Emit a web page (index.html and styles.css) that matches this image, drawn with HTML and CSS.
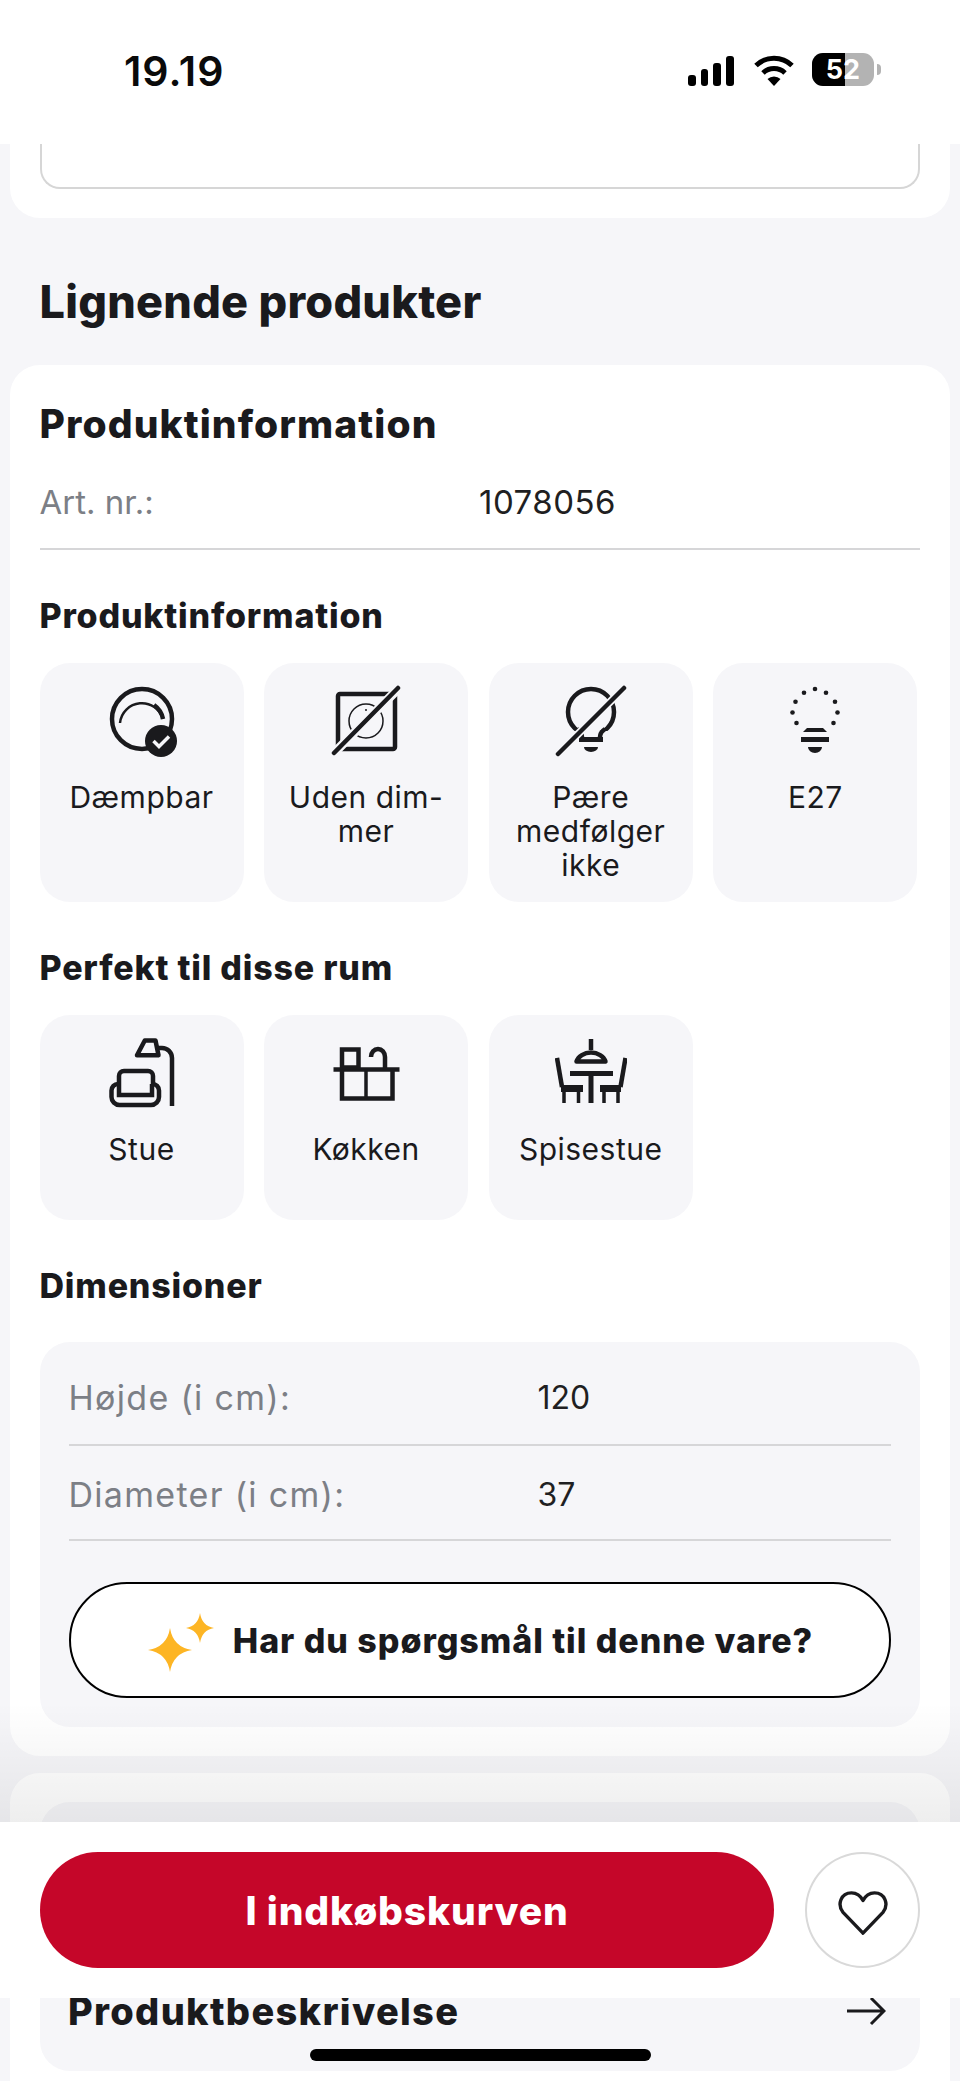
FILE: index.html
```html
<!DOCTYPE html>
<html lang="da">
<head>
<meta charset="utf-8">
<title>Produktinformation</title>
<link rel="stylesheet" href="styles.css">
</head>
<body>
<div class="page">
  <header class="status">
    <span class="clock">19.19</span>
    <div class="status-icons">
      <svg class="signal" width="48" height="32" viewBox="0 0 48 32"><rect x="1" y="20" width="8" height="11" rx="3"/><rect x="14" y="14" width="7" height="17" rx="3"/><rect x="26" y="8" width="8" height="23" rx="3"/><rect x="39" y="1" width="8" height="30" rx="3"/></svg>
      <svg class="wifi" width="42" height="32" viewBox="0 0 42 32"><path d="M3 10.5a26 26 0 0 1 36 0" fill="none" stroke="#000" stroke-width="5"/><path d="M10 18a16 16 0 0 1 22 0" fill="none" stroke="#000" stroke-width="5"/><path d="M14.5 24a9.500 9.500 0 0 1 13 0L21 31z"/></svg>
      <div class="battery"><span class="battery-fill"></span><span class="battery-text">52</span><span class="battery-nub"></span></div>
    </div>
  </header>

  <section class="card card-top"><div class="outline-box"></div></section>

  <h2 class="section-title">Lignende produkter</h2>

  <section class="card card-info">
    <h3 class="card-title">Produktinformation</h3>
    <div class="art-row"><span class="muted">Art. nr.:</span><span class="art-value">1078056</span></div>

    <h4 class="sub-title">Produktinformation</h4>
    <div class="tiles">
      <div class="tile">
        <svg class="icon" viewBox="0 0 72 72"><circle cx="36" cy="34" r="30" class="s4"/><path d="M14 38A22 22 0 0 1 57 34" class="s2"/><path d="M48 20a22 22 0 0 1 9 14" class="s4"/><circle cx="55" cy="56" r="16" class="fill"/><path d="M47.500 56l5.500 5.500 10-10" fill="none" stroke="#f6f6f9" stroke-width="3.500"/></svg>
        <span class="tile-label">Dæmpbar</span>
      </div>
      <div class="tile">
        <svg class="icon" viewBox="0 0 72 72"><rect x="8" y="9" width="57" height="55" rx="2" class="s4"/><circle cx="36" cy="36" r="17" class="s1"/><circle cx="36" cy="25" r="1" class="fill"/><path d="M6 66L66 6" fill="none" stroke="#f6f6f9" stroke-width="9"/><path d="M4 68L68 3" class="s4 round"/></svg>
        <span class="tile-label">Uden dim-<br>mer</span>
      </div>
      <div class="tile">
        <svg class="icon" viewBox="0 0 72 72"><circle cx="36" cy="27" r="23" class="s4"/><rect x="12" y="46" width="48" height="9" fill="#f6f6f9"/><path d="M22 44c3 2 5 5 5 8" class="s4"/><path d="M50 44c-3 2-5 5-5 8" class="s4"/><rect x="24" y="52" width="24" height="5" class="fill"/><path d="M29 62h14a7 5 0 0 1-14 0z" class="fill"/><path d="M6 66L66 6" fill="none" stroke="#f6f6f9" stroke-width="8"/><path d="M3 69L69 3" class="s4 round"/></svg>
        <span class="tile-label">Pære<br>medfølger<br>ikke</span>
      </div>
      <div class="tile">
        <svg class="icon" viewBox="0 0 72 72"><g class="fill"><circle cx="36" cy="4" r="2.300"/><circle cx="47" cy="7.700" r="2.300"/><circle cx="56" cy="16.700" r="2.300"/><circle cx="58.500" cy="27.500" r="2.300"/><circle cx="54.500" cy="38" r="2.300"/><circle cx="17.500" cy="38" r="2.300"/><circle cx="13.500" cy="27.500" r="2.300"/><circle cx="16.500" cy="16.700" r="2.300"/><circle cx="25" cy="7.700" r="2.300"/><path d="M28 43h16l4 4H24z"/><rect x="22" y="52" width="28" height="5"/><path d="M29 62h14a7 6 0 0 1-14 0z"/></g></svg>
        <span class="tile-label">E27</span>
      </div>
    </div>

    <h4 class="sub-title">Perfekt til disse rum</h4>
    <div class="tiles">
      <div class="tile">
        <svg class="icon" viewBox="0 0 72 72"><path d="M31 18.300L38.800 3.500H49.500L52.500 18.300Z" class="s4 joined"/><path d="M52 11h4a10 10 0 0 1 10 10V69" class="s4"/><path d="M13 47V39a5 5 0 0 1 5-5H42a5 5 0 0 1 5 5V47" class="s4"/><path d="M13 47h-1a6.500 6.500 0 0 0-6.500 6.500V60a8 8 0 0 0 8 8H45a8 8 0 0 0 8-8V53.500A6.500 6.500 0 0 0 46.500 47H46" class="s4"/><path d="M13 47V58H46V47" class="s4"/></svg>
        <span class="tile-label">Stue</span>
      </div>
      <div class="tile">
        <svg class="icon" viewBox="0 0 72 72"><path d="M3.500 32.500H69.500" class="s4"/><path d="M12 32.500V61.500H62.500V32.500" class="s4"/><path d="M36 32.500V61.500" class="s3"/><rect x="12" y="12.500" width="16.500" height="18" class="s4"/><path d="M41 20a7 8 0 0 1 14 0V32" class="s4"/></svg>
        <span class="tile-label">Køkken</span>
      </div>
      <div class="tile">
        <svg class="icon" viewBox="0 0 72 72"><path d="M36 2V13" class="s4"/><path d="M21.500 24.500a15 12 0 0 1 29 0z" class="s4 joined"/><path d="M15 36.500H58" class="s5"/><path d="M36 36.500V66" class="s5"/><path d="M2 21L7 50" class="s4"/><path d="M70.500 21L65.500 50" class="s4"/><path d="M6 51.500H28M45 51.500H66" class="s7"/><path d="M9 52V66M23.500 52V66M49 52V66M63 52V66" class="s3"/></svg>
        <span class="tile-label">Spisestue</span>
      </div>
    </div>

    <h4 class="sub-title">Dimensioner</h4>
    <div class="dim-box">
      <div class="dim-row"><span class="muted dim-name">Højde (i cm):</span><span class="dim-value">120</span></div>
      <div class="dim-row"><span class="muted dim-name">Diameter (i cm):</span><span class="dim-value">37</span></div>
      <button class="ask" type="button">
        <svg class="sparkle" width="70" height="62" viewBox="0 0 70 62"><path class="spark" d="M24 16Q27 35 46 38Q27 41 24 60Q21 41 2 38Q21 35 24 16Z"/><path class="spark" d="M54 1Q56 14 68 16Q56 18 54 31Q52 18 40 16Q52 14 54 1Z"/></svg>
        <span>Har du spørgsmål til denne vare?</span>
      </button>
    </div>
  </section>

  <section class="card card-desc">
    <div class="desc-box">
      <span class="desc-title">Produktbeskrivelse</span>
      <svg class="arrow" width="40" height="30" viewBox="0 0 40 30"><path d="M1 15H38M25 2L38 15L25 28" fill="none" stroke="#1a1a1d" stroke-width="3"/></svg>
    </div>
  </section>

  <div class="buybar">
    <button class="buy" type="button">I indkøbskurven</button>
    <button class="fav" type="button" aria-label="Favorit">
      <svg width="50" height="48" viewBox="0 0 52 48"><path d="M26 45L5 23C-1 15 3 3 14 3c5.500 0 9.500 3 12 8 2.500-5 6.500-8 12-8 11 0 15 12 9 20z" fill="none" stroke="#1a1a1d" stroke-width="3.500" stroke-linejoin="round"/></svg>
    </button>
  </div>
  <div class="home-indicator"></div>
</div>
</body>
</html>
```

FILE: styles.css
```css
* { box-sizing: border-box; }
html, body { margin: 0; padding: 0; }
body {
  font-family: Inter, "Liberation Sans", sans-serif;
  color: #1a1a1d;
  background: #f6f6f9;
}
.page {
  position: relative;
  width: 960px;
  height: 2081px;
  overflow: hidden;
  background: #f6f6f9;
}
h2, h3, h4 { margin: 0; }

/* status bar */
.status {
  height: 144px;
  background: #fff;
  display: flex;
  justify-content: space-between;
  padding: 47px 86px 0 124px;
}
.clock {
  font-size: 41px;
  line-height: 48px;
  font-weight: 600;
  color: #0a0a0a;
  letter-spacing: 1px;
}
.status-icons { display: flex; align-items: flex-start; gap: 12px; padding-top: 8px; }
.signal { fill: #000; }
.wifi { fill: #000; margin-left: 6px; }
.battery {
  position: relative;
  width: 62px;
  height: 33px;
  margin-top: -2px;
  margin-left: 5px;
  border-radius: 11px;
  background: #b3b3b3;
}
.battery-fill {
  position: absolute;
  left: 0; top: 0; bottom: 0;
  width: 33px;
  background: #000;
  border-radius: 11px 0 0 11px;
}
.battery-text {
  position: absolute;
  inset: 0;
  text-align: center;
  font-size: 27px;
  line-height: 33px;
  font-weight: 700;
  color: #fff;
}
.battery-nub {
  position: absolute;
  right: -7px; top: 11px;
  width: 4px; height: 11px;
  border-radius: 0 4px 4px 0;
  background: #b3b3b3;
}

/* cards */
.card { margin: 0 10px; background: #fff; }
.card-top { padding: 0 30px 29px; border-radius: 0 0 30px 30px; height: 74px; }
.outline-box {
  height: 45px;
  border: 2px solid #d6d6d6;
  border-top: 0;
  border-radius: 0 0 20px 20px;
}
.section-title {
  margin: 56px 39.500px 35px;
  font-size: 45px;
  line-height: 56px;
  font-weight: 800;
  letter-spacing: 0.25px;
}
.card-info { padding: 34px 30.500px 29px 29.500px; border-radius: 30px; }
.card-title {
  font-size: 39px;
  line-height: 50px;
  font-weight: 800;
  letter-spacing: 1.100px;
}
.art-row {
  display: flex;
  height: 101px;
  padding-top: 30px;
  border-bottom: 2px solid #d6d6d8;
  font-size: 33px;
  line-height: 46px;
}
.art-row .muted { width: 439.500px; }
.muted { color: #7c7f86; }
.art-value { color: #1f1f22; letter-spacing: 0.500px; }
.sub-title {
  margin-top: 44px;
  margin-bottom: 25px;
  font-size: 34px;
  line-height: 44px;
  font-weight: 800;
  letter-spacing: 0.800px;
}
.tiles {
  display: grid;
  grid-template-columns: repeat(4, 204px);
  gap: 20.600px;
}
.tile {
  display: flex;
  flex-direction: column;
  align-items: center;
  min-height: 205px;
  padding: 22px 6px 20px;
  background: #f6f6f9;
  border-radius: 30px;
}
.icon { width: 72px; height: 72px; display: block; flex: none; }
.fill { fill: #1a1a1d; }
.s1, .s2, .s3, .s4, .s5, .s7 { fill: none; stroke: #1a1a1d; }
.s1 { stroke-width: 1.500px; }
.s2 { stroke-width: 2.500px; }
.s3 { stroke-width: 3.500px; }
.s4 { stroke-width: 4.500px; }
.s5 { stroke-width: 5px; }
.s7 { stroke-width: 7px; }
.round { stroke-linecap: round; }
.joined { stroke-linejoin: round; }
.tile-label {
  margin-top: 23px;
  font-size: 30px;
  line-height: 34px;
  letter-spacing: 0.5px;
  text-align: center;
  color: #1a1a1d;
}

/* dimensions */
.dim-box {
  margin-top: 34px;
  height: 385px;
  padding: 0 29px;
  background: #f6f6f9;
  border-radius: 30px;
}
.dim-row {
  display: flex;
  height: 95px;
  padding-top: 26px;
  border-bottom: 2px solid #d6d6d8;
  font-size: 32px;
  line-height: 46px;
}
.dim-row:first-child { height: 104px; padding-top: 33px; }
.dim-name { width: 469px; font-size: 34px; letter-spacing: 1.300px; }
.dim-value { color: #1f1f22; }
.ask {
  width: 100%;
  height: 116px;
  margin-top: 41px;
  display: flex;
  align-items: center;
  justify-content: center;
  gap: 17px;
  background: #fff;
  border: 2.500px solid #000;
  border-radius: 58px;
  font-family: inherit;
  font-size: 34px;
  font-weight: 800;
  color: #1a1a1d;
  letter-spacing: 0.950px;
}
.sparkle { flex: none; margin-top: 6px; }
.spark { fill: #fdb524; }

/* description card */
.card-desc { margin-top: 17px; padding: 29px 30px 0; height: 400px; border-radius: 30px; }
.desc-box {
  height: 269px;
  display: flex;
  align-items: flex-end;
  justify-content: space-between;
  padding: 0 34px 40px 28px;
  background: #f6f6f9;
  border-radius: 30px;
}
.desc-title {
  font-size: 38px;
  line-height: 40px;
  font-weight: 800;
  letter-spacing: 1.300px;
}
.arrow { margin-bottom: 5px; }

/* bottom bar */
.buybar {
  position: absolute;
  left: 0; right: 0; top: 1822px;
  height: 176px;
  padding: 30px 40px;
  display: flex;
  gap: 31px;
  background: #fff;
}
.buybar::before {
  content: "";
  position: absolute;
  left: 0; right: 0; top: -120px;
  height: 120px;
  background: linear-gradient(to bottom, rgba(0,0,0,0), rgba(0,0,0,0.065));
  pointer-events: none;
}
.buy {
  width: 734px;
  height: 116px;
  padding: 0;
  border: 0;
  border-radius: 58px;
  background: #c50629;
  color: #fff;
  font-family: inherit;
  font-size: 39px;
  font-weight: 800;
  letter-spacing: 0.850px;
}
.fav {
  width: 115px;
  height: 116px;
  padding: 6px 0 0;
  display: flex;
  align-items: center;
  justify-content: center;
  background: #fff;
  border: 2px solid #d9d9d9;
  border-radius: 50%;
}
.home-indicator {
  position: absolute;
  left: 310px; top: 2049px;
  width: 341px; height: 12px;
  border-radius: 6px;
  background: #000;
}
```
